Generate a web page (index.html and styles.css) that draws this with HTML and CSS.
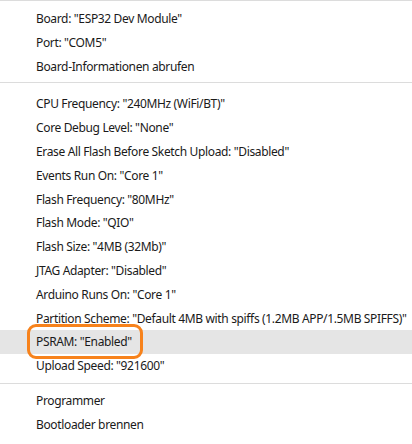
FILE: index.html
```html
<!DOCTYPE html>
<html>
<head>
<meta charset="utf-8">
<link rel="stylesheet" href="styles.css">
</head>
<body>
<div class="menu">
  <div class="group first">
    <div class="item">Board: "ESP32 Dev Module"</div>
    <div class="item">Port: "COM5"</div>
    <div class="item">Board-Informationen abrufen</div>
  </div>
  <div class="sep"></div>
  <div class="group">
    <div class="item">CPU Frequency: "240MHz (WiFi/BT)"</div>
    <div class="item">Core Debug Level: "None"</div>
    <div class="item">Erase All Flash Before Sketch Upload: "Disabled"</div>
    <div class="item">Events Run On: "Core 1"</div>
    <div class="item">Flash Frequency: "80MHz"</div>
    <div class="item">Flash Mode: "QIO"</div>
    <div class="item">Flash Size: "4MB (32Mb)"</div>
    <div class="item">JTAG Adapter: "Disabled"</div>
    <div class="item">Arduino Runs On: "Core 1"</div>
    <div class="item">Partition Scheme: "Default 4MB with spiffs (1.2MB APP/1.5MB SPIFFS)"</div>
    <div class="item active marked">PSRAM: "Enabled"</div>
    <div class="item">Upload Speed: "921600"</div>
  </div>
  <div class="sep last"></div>
  <div class="group">
    <div class="item">Programmer</div>
    <div class="item">Bootloader brennen</div>
  </div>
</div>
</body>
</html>
```
FILE: styles.css
```css
html, body {
  margin: 0;
  padding: 0;
  background: #ffffff;
}
.menu {
  width: 412px;
  height: 444px;
  box-sizing: border-box;
  border-top: 1px solid #dcdcdc;
  font-family: "Noto Sans", sans-serif;
  font-size: 12px;
  letter-spacing: -0.35px;
  color: #1a1a1a;
  display: flex;
  flex-direction: column;
  overflow: hidden;
}
.group {
  display: flex;
  flex-direction: column;
}
.group.first {
  padding-top: 6px;
}
.item {
  height: 23.8px;
  line-height: 23.8px;
  padding-left: 36px;
  white-space: nowrap;
  position: relative;
}
.item.active {
  background: #e5e5e5;
}
.item.marked::after {
  content: "";
  position: absolute;
  left: 27px;
  top: -6px;
  width: 110px;
  height: 29px;
  border: 3px solid #f7821b;
  border-radius: 9px;
}
.sep {
  height: 1px;
  background: #dcdcdc;
  margin: 4px 0 9px 0;
}
.sep.last {
  margin: 5px 0 5px 0;
}
```
